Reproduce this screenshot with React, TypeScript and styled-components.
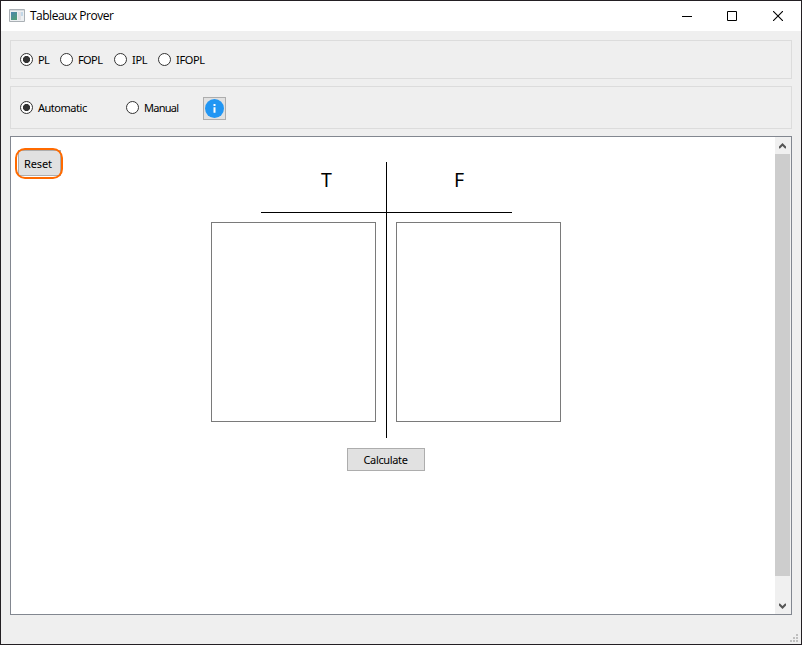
import React from "react";
import styled, { createGlobalStyle } from "styled-components";

const GlobalStyle = createGlobalStyle`
  * { box-sizing: border-box; }
  body { margin: 0; background: #f0f0f0; overflow: hidden; }
`;

const Window = styled.div`
  width: 802px;
  height: 645px;
  display: flex;
  flex-direction: column;
  background: #efefef;
  border: 1px solid #231f23;
  font: 11px/14px "Noto Sans", "Liberation Sans", sans-serif;
  color: #000;
`;

const TitleBar = styled.header`
  height: 30px;
  flex: none;
  display: flex;
  align-items: center;
  background: #fff;
  padding-left: 8px;
`;

const Title = styled.h1`
  flex: 1;
  margin: 0 0 0 5px;
  font: 400 12px/16px "Open Sans", sans-serif;
  letter-spacing: -0.5px;
`;

const WindowButton = styled.button`
  width: 46px;
  height: 30px;
  padding: 0;
  border: 0;
  background: none;
  display: flex;
  align-items: center;
  justify-content: center;
`;

const Body = styled.main`
  flex: 1;
  padding: 9px 9px 0;
  display: flex;
  flex-direction: column;
`;

const Group = styled.section<{ $height: number; $bottom: number }>`
  height: ${(p) => p.$height}px;
  margin-bottom: ${(p) => p.$bottom}px;
  border: 1px solid #dcdcdc;
  padding-left: 9px;
  display: flex;
  align-items: center;
`;

const Option = styled.label<{ $width: number; $spacing: number }>`
  width: ${(p) => p.$width}px;
  display: flex;
  align-items: center;
  gap: 5px;
  white-space: nowrap;
  letter-spacing: ${(p) => p.$spacing}px;
`;

const Dot = styled.span<{ $on?: boolean }>`
  width: 13px;
  height: 13px;
  flex: none;
  border: 1px solid #333;
  border-radius: 50%;
  background: ${(p) => (p.$on ? "radial-gradient(circle, #333 3.2px, #fff 3.9px)" : "#fff")};
`;

const InfoButton = styled.button`
  width: 23px;
  height: 23px;
  margin-top: 1px;
  padding: 0;
  border: 1px solid #adadad;
  background: #e1e1e1;
  display: flex;
  align-items: center;
  justify-content: center;
`;

const Workspace = styled.section`
  height: 479px;
  border: 1px solid #828790;
  background: #fff;
  display: flex;
`;

const Canvas = styled.div`
  width: 764px;
  display: flex;
  flex-direction: column;
  padding: 13px 0 0 7px;
`;

const PushButton = styled.button<{ $width: number; $height: number; $spacing: number; $padding?: string }>`
  position: relative;
  width: ${(p) => p.$width}px;
  height: ${(p) => p.$height}px;
  padding: ${(p) => p.$padding ?? "0"};
  border: 1px solid #adadad;
  background: #e1e1e1;
  color: #000;
  font: inherit;
  letter-spacing: ${(p) => p.$spacing}px;
`;

const Highlight = styled.span`
  position: absolute;
  inset: -3px -3px -4px -4px;
  border: 2px solid #ff6a00;
  border-radius: 10px;
`;

const Tableau = styled.div`
  display: flex;
  height: 276px;
  margin: -14px 0 0 193px;
`;

const Side = styled.div<{ $right?: boolean }>`
  width: 176px;
  border-right: ${(p) => (p.$right ? "0" : "1px solid #000")};
  padding-left: ${(p) => (p.$right ? "9px" : "0")};
`;

const Sign = styled.h2<{ $right?: boolean }>`
  width: 125px;
  height: 51px;
  margin: ${(p) => (p.$right ? "0 0 9px -9px" : "0 0 9px 50px")};
  padding: 6px ${(p) => (p.$right ? "0 0 67px" : "0 0 60px")};
  border-bottom: 1px solid #000;
  font: 400 19.5px/24px "Noto Sans", sans-serif;
`;

const Formulas = styled.textarea`
  display: block;
  width: 165px;
  height: 200px;
  border: 1px solid #7a7a7a;
  background: #fff;
  resize: none;
`;

const Actions = styled.div`
  margin: 10px 0 0 329px;
`;

const ScrollBar = styled.div`
  width: 16px;
  background: #f0f0f0;
  display: flex;
  flex-direction: column;
`;

const ScrollArrow = styled.div`
  width: 15px;
  height: 17px;
  display: flex;
  align-items: center;
  justify-content: center;
`;

const Thumb = styled.div`
  width: 15px;
  height: 422px;
  margin-bottom: 21px;
  background: #cdcdcd;
`;

const StatusBar = styled.footer`
  flex: 1;
  display: flex;
  justify-content: flex-end;
  align-items: flex-end;
  margin-right: -6px;
  padding-bottom: 2px;
`;

const modes = [
  { name: "PL", width: 40, spacing: -0.7 },
  { name: "FOPL", width: 54, spacing: -0.6 },
  { name: "IPL", width: 44, spacing: -0.35 },
  { name: "IFOPL", width: 60, spacing: -0.35 },
];

export default function App() {
  return (
    <>
      <GlobalStyle />
      <Window>
        <TitleBar>
          <svg width="16" height="14" viewBox="0 0 16 14">
            <defs>
              <linearGradient id="screen" x2="0.6" y2="1">
                <stop stopColor="#4b86b0" />
                <stop offset="1" stopColor="#4f9c79" />
              </linearGradient>
            </defs>
            <path d="M.5 .5h15v12H.5z" fill="#edf0f2" stroke="#aab0b5" />
            <path d="M1 1h14v1H1z" fill="#d5dade" />
            <path d="M2 3h6v8H2z" fill="url(#screen)" />
            <path d="M9 3h3v8H9z" fill="#e0e0e4" />
            <path d="M12 3h2v4h-2z" fill="#c3d8e8" />
          </svg>
          <Title>Tableaux Prover</Title>
          <WindowButton aria-label="Minimize">
            <svg width="12" height="10"><path d="M2 5h10v1H2z" /></svg>
          </WindowButton>
          <WindowButton aria-label="Maximize">
            <svg width="10" height="10"><path d="M.5 .5h9v9h-9z" fill="none" stroke="#000" /></svg>
          </WindowButton>
          <WindowButton aria-label="Close">
            <svg width="10" height="10"><path d="M0 0l10 10M10 0L0 10" fill="none" stroke="#000" strokeWidth="1.1" /></svg>
          </WindowButton>
        </TitleBar>
        <Body>
          <Group $height={39} $bottom={7}>
            {modes.map((m, i) => (
              <Option key={m.name} $width={m.width} $spacing={m.spacing}>
                <Dot $on={i === 0} />
                {m.name}
              </Option>
            ))}
          </Group>
          <Group $height={43} $bottom={7}>
            <Option $width={106} $spacing={-0.48}><Dot $on />Automatic</Option>
            <Option $width={77} $spacing={-0.75}><Dot />Manual</Option>
            <InfoButton aria-label="Information">
              <svg width="19" height="19" viewBox="0 0 19 19">
                <circle cx="9.5" cy="9.5" r="9.5" fill="#2196f3" />
                <path d="M8.5 5h2v2h-2zM8.5 8.3h2v5.5h-2z" fill="#fff" />
              </svg>
            </InfoButton>
          </Group>
          <Workspace>
            <Canvas>
              <PushButton $width={43} $height={26} $spacing={-0.1} $padding="2px 3px 0 0">
                Reset
                <Highlight />
              </PushButton>
              <Tableau>
                <Side>
                  <Sign>T</Sign>
                  <Formulas aria-label="True formulas" />
                </Side>
                <Side $right>
                  <Sign $right>F</Sign>
                  <Formulas aria-label="False formulas" />
                </Side>
              </Tableau>
              <Actions>
                <PushButton $width={78} $height={23} $spacing={-0.36} $padding="0 1px 0 0">Calculate</PushButton>
              </Actions>
            </Canvas>
            <ScrollBar>
              <ScrollArrow>
                <svg width="7" height="6"><path d="M0 5L3.5 1.5L7 5" fill="none" stroke="#555" strokeWidth="2" /></svg>
              </ScrollArrow>
              <Thumb />
              <ScrollArrow>
                <svg width="7" height="6"><path d="M0 1L3.5 4.5L7 1" fill="none" stroke="#555" strokeWidth="2" /></svg>
              </ScrollArrow>
            </ScrollBar>
          </Workspace>
          <StatusBar>
            <svg width="8" height="8" fill="#bfbfbf">
              <path d="M6 0h2v2H6zM3 3h2v2H3zM6 3h2v2H6zM0 6h2v2H0zM3 6h2v2H3zM6 6h2v2H6z" />
            </svg>
          </StatusBar>
        </Body>
      </Window>
    </>
  );
}
